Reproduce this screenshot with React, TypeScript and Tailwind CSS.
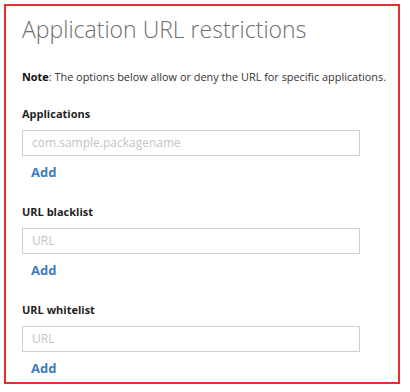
import React from "react";

function Section({ label, placeholder, className }: { label: string; placeholder: string; className?: string }) {
  return (
    <div className={className}>
      <div className="text-[11px] font-bold leading-[14px] text-[#1f1f1f]">{label}</div>
      <div className="mt-[9px] h-[26px] w-[338px] border border-[#cfcfcf] bg-white px-[9px] text-[12px] leading-[24px] text-[#c4c4c4]">
        {placeholder}
      </div>
      <div className="mt-[8px] pl-[9px] text-[13px] font-bold leading-[16px] text-[#3c7dc2]">Add</div>
    </div>
  );
}

export default function App() {
  return (
    <div className="h-[392px] w-[410px] bg-white pl-[4px] pt-[4px]" style={{ fontFamily: '"Open Sans", sans-serif' }}>
      <div className="h-[380px] w-[396px] border-2 border-[#ee2a33] pl-[16px] pr-[4px] pt-[8px]">
        <div className="text-[23px] font-light leading-[30px] text-[#6e6e6e]">Application URL restrictions</div>
        <div className="mt-[26px] whitespace-nowrap text-[10.9px] leading-[14px] text-[#333]">
          <span className="font-bold text-[#111]">Note</span>: The options below allow or deny the URL for specific applications.
        </div>
        <Section className="mt-[23px]" label="Applications" placeholder="com.sample.packagename" />
        <Section className="mt-[25px]" label="URL blacklist" placeholder="URL" />
        <Section className="mt-[25px]" label="URL whitelist" placeholder="URL" />
      </div>
    </div>
  );
}
